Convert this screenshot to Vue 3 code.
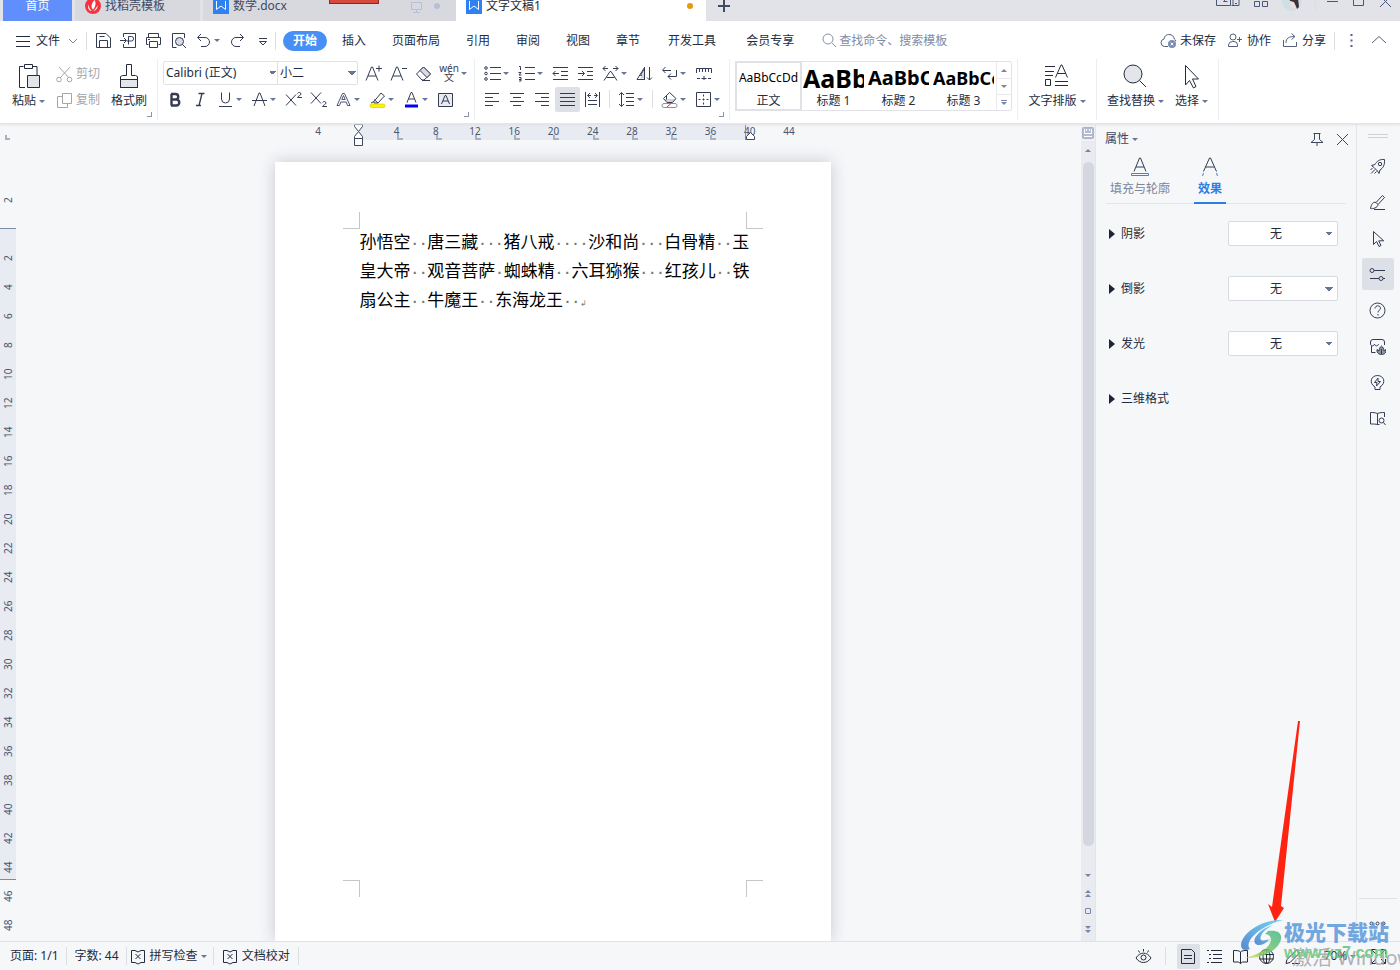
<script setup>
import { h, ref } from 'vue'

const icons = {
  // quick access
  menu: '<path d="M1 3.500h14M1 8.500h14M1 13.500h14"/>',
  chev: '<path d="M1 3l4 4 4-4"/>',
  save: '<path d="M1.500 15.500V1.500h9.500l4.500 4.500v9.500z"/><path d="M4.500 15v-6.500h8v6.500M4.500 4.500h5"/>',
  pdf: '<path d="M3.500 5V1.500h12v14h-12V12M0 8.500h6M4 6l2.500 2.500L4 11M8.500 12.500V4.500h3a2 2.200 0 010 4.500H7"/>',
  print: '<path d="M3.500 5V1.500h10V5M3.500 12.500h-2V5.500h14v7h-2M4.500 9.500h8v6h-8zM3 7.500h2"/>',
  preview: '<path d="M14.500 6V1.500h-12v14h4"/><circle cx="9.500" cy="9.500" r="4" fill="#d9dce2"/><path d="M12.500 12.500l3.500 3.500"/>',
  undo: '<path d="M6 2L2.500 5.500 6 9M3 5.500h7a4.500 4.500 0 010 9H6"/>',
  redo: '<path d="M11 2l3.500 3.500L11 9M14 5.500H7a4.500 4.500 0 000 9h4"/>',
  more: '<path d="M5 6.500h8"/><path d="M5.500 9.500h7L9 13z"/>',
  search: '<circle cx="6" cy="6" r="5"/><path d="M10 10l4 4"/>',
  cloud: '<path d="M8 14.500H4.500a3.800 3.800 0 01-.5-7.500C4.500 3.500 7 2.500 9 2.500c3 0 5 2 5.300 4.500 1 .6 1.500 1.400 1.500 2.200"/><circle cx="12" cy="12" r="4" fill="#7c8db2" stroke="none"/><path d="M10.700 10.700l2.600 2.600M13.300 10.700l-2.600 2.600" stroke="#fff"/>',
  coop: '<circle cx="6" cy="5" r="3"/><path d="M1.500 14.500v-1.500a4 4 0 014-3.500h1.500a3.500 3.500 0 013.500 3.500v1.500zM10 7.500h5M12.500 5v5"/>',
  share: '<path d="M1.500 8v6.500h13V10M4 11c0-5 3-6.500 8.500-6.500M9.500 1.500l3.500 3-3.500 3"/>',
  vdots: '<path d="M8.500 2v2M8.500 7.500v2M8.500 13v2" stroke-width="2"/>',
  up: '<path d="M1 11l7-6.500 7 6.500"/>',
  // clipboard
  paste: '<path d="M9 24.500H3.500v-21h4M17 3.500h4v9M8.500 1.500h8v4h-8z"/><path d="M11.500 12.500h12v12h-12z" fill="#e3e5ea"/>',
  cut: '<path d="M3 1l10 11M14 1L4 12"/><circle cx="3" cy="13.500" r="2.300"/><circle cx="13.500" cy="13.500" r="2.300"/>',
  copy: '<path d="M6.500 1.500h9v10h-9zM6 4.500H1.500v11h10V12"/>',
  brush: '<path d="M4.500 16.500h17v8h-17z" fill="#e3e5ea"/><path d="M4.500 24.500v-11l2-1h4v-11h5v11h4l2 1v11zM4.500 16.500h17"/>',
  // font
  aplus: '<path d="M1 15.500L6.500 2h1L13 15.500M3 11h8M11 3.500h6M14 .500v6"/>',
  aminus: '<path d="M1 15.500L6.500 2h1L13 15.500M3 11h8M12 3.500h5"/>',
  eraser: '<path d="M1.500 9l7-7 7 7-6.500 6H7z"/><path d="M5 5.500l7 7 3.500-3.500-7-7z" fill="#d9dce2"/><path d="M7 15.500h8"/>',
  bold: '<path d="M4.500 3v11.500M4 3h4.500a2.700 2.700 0 010 5.500H4.500h4.800a3 3 0 010 6H4" stroke-width="2.400"/>',
  italic: '<path d="M6.500 2.500h6M4 14.500h5M10 2.500l-3 12" stroke-width="1.300"/>',
  underline: '<path d="M4.500 1.500v6.500a4 4 0 008 0V1.500M2 15.500h13"/>',
  strike: '<path d="M3 15L8 2h1l5 13M1 9.500h15"/>',
  sup: '<path d="M1 3.500l10 11M11 3.500l-10 11M12.500 2.500c.5-1.500 3.500-1.300 3.500.500 0 1.300-3 2-3.500 3.500H17"/>',
  sub: '<path d="M1 1.500l10 11M11 1.500l-10 11M12.500 11.500c.5-1.500 3.500-1.300 3.500.500 0 1.300-3 2-3.500 3.500H17"/>',
  aout: '<path d="M2 14.500L7.500 2.500h2L15 14.500h-2.500L11.200 11H5.800l-1.300 3.500zM6.800 8.500h3.400L8.500 4.500z" fill="#fff" stroke="#4c566e"/>',
  marker: '<path d="M5 10.500L12 2l3.500 3L9 12H5zM5 8.500l4 3.500M2 12l3-1.500"/><rect x="1" y="13" width="15" height="3.500" rx="1.500" fill="#fff200" stroke="#c2b800" stroke-width=".500"/>',
  acolor: '<path d="M4 11.500L8 1.500h1l4 10M5.500 8h6"/><rect x="2" y="13.500" width="13" height="3" fill="#00f" stroke="none"/>',
  abox: '<path d="M1.500 2.500h14v13h-14z" fill="#e9ebef"/><path d="M4.500 13L8 4.500h1l3.500 8.500M6 10h5"/>',
  // paragraph
  bullets: '<circle cx="2" cy="3" r="1.300"/><circle cx="2" cy="8.500" r="1.300"/><circle cx="2" cy="14" r="1.300"/><path d="M6 2.500h11M6 8.500h11M6 14.500h11"/>',
  numbers: '<path d="M1 1.500h1.500V5M.500 7.500h2.500L1 10h2.500M1 12.500h2v3.500H1M1 14.500h2M7 2.500h10M7 8.500h10M7 14.500h10"/>',
  outdent: '<path d="M1 2.500h15M9 6.500h7M9 10.500h7M1 14.500h15M1 8.500h6M3.500 6L1 8.500 3.500 11"/>',
  indent: '<path d="M1 2.500h15M10 6.500h6M10 10.500h6M1 14.500h15M1 8.500h6M5 6l2.500 2.500L5 11"/>',
  ascale: '<path d="M2 15.500L8 6.500h1l6 9M4.500 12.500h8M1 3.500h5M11 3.500h5M3.500 1L1 3.500 3.500 6M13.500 1L16 3.500 13.500 6"/>',
  sort: '<path d="M4.500 10.500h4v-7zM1 14.500L8.500 2.500v12z"/><path d="M4 13.500l4.500-8v8z" fill="#cfd3da" stroke="none"/><path d="M8.500 2v13M13.500 2v13M11 12.500l2.500 2.500 2.500-2.500"/>',
  wrap: '<path d="M4.500 2L1.500 5l3 3M2 5.500h8M15.500 5v6.500H7M10 8.500l-3 3 3 3"/>',
  rulericon: '<path d="M1.500 8V3.500h15V8M4.500 4v3M7.500 4v3M10.500 4v3M13.500 4v3M2 13.500h3M6.500 13.500h5M13 13.500h3M9 11v4"/>',
  left: '<path d="M1 2.500h14M1 6.500h8M1 10.500h14M1 14.500h8"/>',
  center: '<path d="M1 2.500h14M4 6.500h8M1 10.500h14M4 14.500h8"/>',
  right: '<path d="M1 2.500h14M7 6.500h8M1 10.500h14M7 14.500h8"/>',
  justify: '<path d="M1 2.500h15M1 6.500h15M1 10.500h15M1 14.500h15"/>',
  spread: '<path d="M1.500 1v15M15.500 1v15M4 4.500h3M10 4.500h3M6 2L3.500 4.500 6 7M11 2l2.500 2.500L11 7M4 9.500h9M4 13.500h9"/>',
  lines: '<path d="M3.500 2v13M1 4l2.500-2.500L6 4M1 13l2.500 2.500L6 13M8 2.500h8M8 6.500h8M8 10.500h8M8 14.500h8"/>',
  bucket: '<path d="M3.500 8h11l-3 3.500h-5z" fill="#cfd3da" stroke="none"/><path d="M2.500 7.500l6-6 6.500 6-3.500 4h-5.500zM5.500 4.500v4"/><rect x="1" y="12.500" width="15" height="4" rx="2" fill="#fff" stroke="#8a8f9b"/><path d="M6 16l4-3.500" stroke="#e33"/>',
  border: '<path d="M1.500 1.500h14v14h-14z"/><path d="M8.500 3.500v10M3.500 8.500h10" stroke-dasharray="2 2"/>',
  // tools
  typeset: '<path d="M1 3.500h10M1 8.500h9M1 12.500h8M1.500 16.500h5v6h-5z"/><path d="M11.500 14.500L17 2h1l5.500 12.500M13.500 10.500h8M11 18.500h13M11 22.500h13"/>',
  find: '<circle cx="11" cy="11" r="9" fill="#e3e5ea"/><path d="M17.500 17.500l6.500 6.500"/>',
  pick: '<path d="M6.500 2.500v19.500l4-4.500 4 7.500 2.500-1.500-3.500-7.500h6z"/>',
  // panel
  afill: '<path d="M4 15.500L9.500 2h1L16 15.500M6 11h8"/><path d="M1.500 17.500h17v2h-17z" stroke="#3a84e8"/>',
  aeffect: '<path d="M3.500 15.500L9.500 2h1L16.500 15.500M5.500 11h9"/><path d="M3.500 17l-1 3M16.500 17l1 3" stroke="#3a84e8"/>',
  pin: '<path d="M4.500 2.500h7M5.500 2.500v6L2 11.500h12L10.500 8.500v-6M8 11.500V15"/>',
  close: '<path d="M2 2l11 11M13 2L2 13"/>',
  // side
  rocket: '<path d="M15.500 1.500c-5-.5-8 2-9.500 5L2.500 7.500 5 9.500l3.500 3.500 1.500 2.500 1-3.500c3-2 5-5 4.500-10.500zM1.500 12l2-2M2 15.500L6 11.500M5.500 15.500l2-2"/><circle cx="11" cy="6" r="1.700"/>',
  pen: '<path d="M7 8.500L13.500 1.500l2 2L9 10.500M7 8.500c-3-1-4.500 1.500-5.500 6C4 15 8.500 14 9 10.500zM5 15.500h11"/>',
  pointer: '<path d="M4.500 1.500v13l3-3 2.500 5 2-1-2.300-4.700h5z"/>',
  sliders: '<circle cx="3" cy="4.500" r="2"/><path d="M5 4.500h11M1 12.500h9M14 12.500h2"/><circle cx="12" cy="12.500" r="2"/>',
  help: '<circle cx="8.500" cy="8.500" r="7.500"/><path d="M6 6.500c0-3.500 5.500-3.500 5.500-.3 0 2-2.500 2-2.500 4.300M9 12v1.500"/>',
  shop: '<path d="M2.500 8v6.500h4M15.500 7V4a2.500 2.500 0 00-2.500-2.500H4A2.500 2.500 0 001.500 4v2c.5 2.500 3.500 2.500 4 0 .5 2.500 3.500 2.500 4 0"/><path d="M12.500 16.500c-3 0-5-2-4.500-5l2 1.500c0-2 1-4 2.500-5 1.500 1 2.500 3 2.500 5l2-1.500c.5 3-1.500 5-4.500 5zM12.500 11v5" fill="#8d94a4"/>',
  bulb: '<path d="M6 15.500v-2.500C-.5 9 2 1.500 8.500 1.500S17.500 9 11 13v2.500zM9 4L5.500 8.500H8L7.500 12l4-4.500H9z"/>',
  book: '<path d="M8.500 14.500V3.500C6 2.500 4 2.500 1.500 2.500v11.500c3 0 5 0 7 .5zM8.500 3.500C11 2.500 13 2.500 15.500 2.500V7M8.500 14.500h2"/><circle cx="12.500" cy="10.500" r="2.500"/><path d="M14.500 12.500l2 2.500"/>',
  dots: '<circle cx="2.500" cy="8.500" r="1.500"/><circle cx="8.500" cy="8.500" r="1.500"/><circle cx="14.500" cy="8.500" r="1.500"/>',
  // status
  spell: '<path d="M5 2.500H1.500v12H5M11 2.500h3.500v12H11M5 2.500l3 1.500 3-1.500M5 14.500l3 1.500 3-1.500M5.500 6l5 5M10.500 6l-5 5"/>',
  eye: '<path d="M1 10C5 3.500 12 3.500 16 10c-4 6-11 6-15 0zM8.500 1v2.500M3.500 2.500l1 2M13.500 2.500l-1 2"/><circle cx="8.500" cy="9.500" r="2.500"/>',
  page: '<path d="M1.500 1.500h10l3 3v11h-13zM4 7.500h8M4 10.500h8"/>',
  outline: '<path d="M1 2.500h2M5 2.500h11M3 6.500h2M7 6.500h9M3 10.500h2M7 10.500h9M1 14.500h2M5 14.500h11"/>',
  read: '<path d="M8.500 15.500V4C7 2.500 5 2.500 1.500 2.500v11.500h5zM8.500 15.500V4c1.500-1.500 3.500-1.500 7-1.500v11.500h-5z"/>',
  globe: '<circle cx="8.500" cy="8.500" r="7"/><ellipse cx="8.500" cy="8.500" rx="3.500" ry="7"/><path d="M1.500 6.500h14M1.500 11h14M8.500 1.500v14"/>',
  pencil: '<path d="M2 15.500l1-4L12.500 2l3 3L6 14.500zM8 15.500h8"/>',
  full: '<path d="M1.500 6V1.500H6M11 1.500h4.500V6M15.500 11v4.500H11M6 15.500H1.500V11M2 2l4 4M15 2l-4 4M2 15l4-4M15 15l-4-4"/>',
  // window
  screens: '<path d="M.500 2v12.500h14V2M15.500 14.500h7.500v-8h-6v8M7.500 5.500c5-1 4 1 0 5h4M19 12.500h2"/>',
  apps: '<path d="M1.500 0h5M9.500 0h5M1.500 6.500h5v5h-5zM9.500 6.500h5v5h-5z"/>',
  monitor: '<path d="M1.500 2.500h10v7h-10zM6.500 10v2.500M3 12.500h7"/>',
  plus: '<path d="M7 1v12M1 7h12" stroke-width="2"/>',
  min: '<path d="M1 4.500h11"/>',
  max: '<path d="M1.500 0v8.500h10V0"/>',
  winx: '<path d="M2 0l11 11M13 0L2 11"/>',
}

const Icon = (p) => {
  const s = Number(p.s || 17)
  return h('svg', { class: 'ico', viewBox: `0 0 ${s} ${s}`, width: s, height: s, 'aria-hidden': 'true', innerHTML: icons[p.name] })
}
Icon.props = ['name', 's']

const quick = [
  { i: 'save', t: '保存' }, { i: 'pdf', t: '输出为PDF' }, { i: 'print', t: '打印' }, { i: 'preview', t: '打印预览' },
  { i: 'undo', t: '撤销', d: 1 }, { i: 'redo', t: '恢复' }, { i: 'more', t: '自定义' },
]
const menus = ['插入', '页面布局', '引用', '审阅', '视图', '章节', '开发工具', '会员专享']
const fontTop = [{ i: 'aplus', t: '增大字号' }, { i: 'aminus', t: '减小字号' }, { i: 'eraser', t: '清除格式' }]
const fontRow = [
  { i: 'bold', t: '加粗' }, { i: 'italic', t: '倾斜' }, { i: 'underline', t: '下划线', d: 1 }, { i: 'strike', t: '删除线', d: 1 },
  { i: 'sup', t: '上标' }, { i: 'sub', t: '下标' }, { i: 'aout', t: '文字效果', d: 1 }, { i: 'marker', t: '突出显示', d: 1 },
  { i: 'acolor', t: '字体颜色', d: 1 }, { i: 'abox', t: '字符底纹' },
]
const paraTop = [
  { i: 'bullets', t: '项目符号', d: 1 }, { i: 'numbers', t: '编号', d: 1 }, { i: 'outdent', t: '减少缩进' }, { i: 'indent', t: '增加缩进' },
  { i: 'ascale', t: '中文版式', d: 1 }, { i: 'sort', t: '排序' }, { i: 'wrap', t: '编辑标记', d: 1 }, { i: 'rulericon', t: '制表位' },
]
const paraRow = [
  { i: 'left', t: '左对齐' }, { i: 'center', t: '居中' }, { i: 'right', t: '右对齐' }, { i: 'justify', t: '两端对齐', on: 1 },
  { i: 'spread', t: '分散对齐', sep: 1 }, { i: 'lines', t: '行距', d: 1, sep: 1 }, { i: 'bucket', t: '底纹', d: 1 }, { i: 'border', t: '边框', d: 1 },
]
const styles = [
  { s: 'AaBbCcDd', n: '正文', c: 'body' }, { s: 'AaBbC', n: '标题 1', c: 'h1' },
  { s: 'AaBbC', n: '标题 2', c: 'h2' }, { s: 'AaBbCc', n: '标题 3', c: 'h3' },
]
const hMarks = ['4', '', '4', '8', '12', '16', '20', '24', '28', '32', '36', '40', '44']
const vMarks = ['2', '', ...Array.from({ length: 24 }, (_, k) => String((k + 1) * 2))]
const lines = [
  '孙悟空  唐三藏   猪八戒    沙和尚   白骨精  玉',
  '皇大帝  观音菩萨 蜘蛛精  六耳猕猴   红孩儿  铁',
  '扇公主  牛魔王  东海龙王  ',
].map((l) => l.match(/ +|[^ ]+/g))
const effects = ref([
  { n: '阴影', v: '无' }, { n: '倒影', v: '无' }, { n: '发光', v: '无' }, { n: '三维格式' },
])
const side = ['rocket', 'pen', 'pointer', 'sliders', 'help', 'shop', 'bulb', 'book']
const sideNames = ['快捷', '样式', '选择', '属性', '帮助', '素材', '推荐', '查词']
</script>

<template>
  <div class="app">
    <header class="tabs">
      <button class="tab home">首页</button>
      <button class="tab docer">
        <svg class="ico" width="16" height="16" viewBox="0 0 16 16"><circle cx="8" cy="8" r="8" fill="#f5333f" stroke="none" /><path d="M9.500 2c2 3 1 7-1.500 9.500C5.500 9 6.500 5 9.500 2zM4 6.500c-.5 3 1 5 3 6.500-3 0-5-3-3-6.500zM12.500 7c.5 3-1.500 5.500-4 6 1.500-1.500 3-3 4-6z" fill="#fff" stroke="none" /></svg>
        找稻壳模板
      </button>
      <button class="tab doc">
        <svg class="ico" width="16" height="16" viewBox="0 0 16 16"><path d="M0 0h16v16H0z" fill="#2f80f0" stroke="none" /><path d="M3.500 3v8.500L8 8l4.500 3.500V3" stroke="#fff" /></svg>
        数学.docx
        <span class="ribbon-tag"></span>
        <Icon name="monitor" s="13" class="pale" /><i class="dot blue"></i>
      </button>
      <button class="tab current">
        <svg class="ico" width="16" height="16" viewBox="0 0 16 16"><path d="M0 0h16v16H0z" fill="#2f80f0" stroke="none" /><path d="M3.500 3v8.500L8 8l4.500 3.500V3" stroke="#fff" /></svg>
        文字文稿1<i class="dot orange"></i>
      </button>
      <button class="tab new" aria-label="新建"><Icon name="plus" s="14" /></button>
      <div class="win">
        <Icon name="screens" s="24" /><Icon name="apps" s="16" />
        <svg class="ico" width="20" height="20" viewBox="0 0 20 20"><circle cx="10" cy="8" r="10" fill="#cfe0e4" stroke="none" /><path d="M7 3l9 2 1 9-2 2-2-5-5-3z" fill="#3a2f3c" stroke="none" /><path d="M8 8l4 1 2 7-5-2z" fill="#f0dcd9" stroke="none" /></svg>
        <i class="vline"></i>
        <Icon name="min" s="13" /><Icon name="max" s="13" /><Icon name="winx" s="15" />
      </div>
    </header>

    <nav class="menubar">
      <button class="file"><Icon name="menu" s="16" />文件<Icon name="chev" s="10" class="grey" /></button>
      <i class="vline"></i>
      <div class="quick">
        <button v-for="q in quick" :key="q.i" class="tool" :class="{ drop: q.d }" :aria-label="q.t"><Icon :name="q.i" /></button>
      </div>
      <i class="vline"></i>
      <button class="pill">开始</button>
      <button v-for="(m, k) in menus" :key="m" class="menu" :class="{ wide: k > 5 }">{{ m }}</button>
      <label class="search"><Icon name="search" s="15" /><input aria-label="搜索" placeholder="查找命令、搜索模板" /></label>
      <div class="cloud">
        <button><Icon name="cloud" />未保存</button>
        <button><Icon name="coop" />协作</button>
        <button><Icon name="share" />分享</button>
        <i class="vline"></i>
        <button aria-label="更多"><Icon name="vdots" /></button>
        <button aria-label="收起功能区"><Icon name="up" /></button>
      </div>
    </nav>

    <section class="ribbon">
      <div class="group clip">
        <button class="big"><Icon name="paste" s="26" /><span class="caret">粘贴</span></button>
        <div class="stack">
          <button class="mini"><Icon name="cut" />剪切</button>
          <button class="mini"><Icon name="copy" />复制</button>
        </div>
        <button class="big"><Icon name="brush" s="26" /><span>格式刷</span></button>
        <i class="corner"></i>
      </div>
      <div class="group font">
        <div class="row">
          <div class="combos">
            <select class="family" aria-label="字体"><option>Calibri (正文)</option></select>
            <select class="size" aria-label="字号"><option>小二</option></select>
          </div>
          <button v-for="b in fontTop" :key="b.i" class="tool" :aria-label="b.t"><Icon :name="b.i" /></button>
          <button class="tool drop pinyin"><span>wén</span><span>文</span></button>
        </div>
        <div class="row">
          <button v-for="b in fontRow" :key="b.i" class="tool" :class="{ drop: b.d }" :aria-label="b.t"><Icon :name="b.i" /></button>
        </div>
        <i class="corner"></i>
      </div>
      <div class="group para">
        <div class="row">
          <button v-for="b in paraTop" :key="b.i" class="tool" :class="{ drop: b.d }" :aria-label="b.t"><Icon :name="b.i" /></button>
        </div>
        <div class="row">
          <template v-for="b in paraRow" :key="b.i">
            <button class="tool" :class="{ drop: b.d, on: b.on }" :aria-label="b.t"><Icon :name="b.i" /></button>
            <i v-if="b.sep" class="sep"></i>
          </template>
        </div>
        <i class="corner"></i>
      </div>
      <div class="group gal">
        <div class="gallery">
          <button v-for="s in styles" :key="s.n" class="style" :class="s.c"><span class="sample">{{ s.s }}</span><span>{{ s.n }}</span></button>
          <div class="scroller">
            <button aria-label="上一行"><i class="tri upward"></i></button>
            <button aria-label="下一行"><i class="tri"></i></button>
            <button aria-label="展开"><i class="bar"></i><i class="tri"></i></button>
          </div>
        </div>
      </div>
      <div class="group type"><button class="big"><Icon name="typeset" s="26" /><span class="caret">文字排版</span></button></div>
      <div class="group seek">
        <button class="big"><Icon name="find" s="26" /><span class="caret">查找替换</span></button>
        <button class="big"><Icon name="pick" s="26" /><span class="caret">选择</span></button>
      </div>
    </section>

    <main class="work">
      <div class="vruler"><i class="tabmark"></i><span v-for="(m, k) in vMarks" :key="k">{{ m }}</span></div>
      <div class="canvas">
        <div class="hruler">
          <span v-for="(m, k) in hMarks" :key="k" :class="{ tick: k > 1 && k < 11 }">{{ m }}</span>
          <svg class="hourglass" width="11" height="22" viewBox="0 0 11 22"><path d="M1.500.500h8v2L5.500 7.500l4 5v2h-8v-2l4-5-4-5zM1.500 14.500h8v7h-8z" fill="#fff" stroke="#3c4660" /></svg>
          <svg class="endmark" width="11" height="16" viewBox="0 0 11 16"><path d="M.500 0v16" stroke="#7c8aa8" /><path d="M1.500 15.500v-3l4-4 4 4v3z" fill="#fff" stroke="#3c4660" /></svg>
        </div>
        <article class="page">
          <div class="marks top"><i></i><i></i></div>
          <div class="text">
            <p v-for="(l, k) in lines" :key="k"><template v-for="(seg, j) in l" :key="j"><span v-if="seg[0] === ' '" class="sp">{{ '·'.repeat(seg.length) }}</span><template v-else>{{ seg }}</template></template><span v-if="k === 2" class="ret">↲</span></p>
          </div>
          <div class="marks bottom"><i></i><i></i></div>
        </article>
      </div>
      <div class="vscroll">
        <svg class="ico" width="12" height="12" viewBox="0 0 12 12"><path d="M.500 1.500a1 1 0 011-1h9a1 1 0 011 1v9a1 1 0 01-1 1h-9a1 1 0 01-1-1z" stroke="#aab2ca" fill="#b4bbd0" /><path d="M2.500 2v4.500h7V2M4.500 2v2M7.500 2v2M2 9.500h8" stroke="#fff" /></svg>
        <div class="track">
          <button aria-label="向上"><i class="tri upward"></i></button>
          <div class="thumb"></div>
          <button aria-label="向下"><i class="tri"></i></button>
          <button aria-label="上一页"><i class="tri upward"></i><i class="tri upward"></i></button>
          <button aria-label="选择浏览对象"><i class="square"></i></button>
          <button aria-label="下一页"><i class="tri"></i><i class="tri"></i></button>
        </div>
      </div>

      <aside class="panel">
        <div class="phead"><span class="caret">属性</span><button aria-label="固定"><Icon name="pin" /></button><button aria-label="关闭"><Icon name="close" s="15" /></button></div>
        <div class="ptabs">
          <button><Icon name="afill" s="20" />填充与轮廓</button>
          <button class="on"><Icon name="aeffect" s="20" />效果</button>
        </div>
        <div v-for="(e, k) in effects" :key="e.n" class="effect">
          <label :for="'fx' + k">{{ e.n }}</label>
          <select v-if="e.v" :id="'fx' + k" v-model="e.v"><option>无</option></select>
        </div>
      </aside>

      <aside class="side">
        <i class="grip"></i>
        <button v-for="(s, k) in side" :key="s" :class="{ on: s === 'sliders' }" :aria-label="sideNames[k]"><Icon :name="s" /></button>
        <div class="foot"><button aria-label="更多工具"><Icon name="dots" /></button></div>
      </aside>
    </main>

    <footer class="status">
      <div class="stats">
        <span>页面: 1/1</span><i class="vline"></i><span>字数: 44</span><i class="vline"></i>
        <button class="check"><Icon name="spell" /><span class="caret">拼写检查</span></button><i class="vline"></i>
        <button><Icon name="spell" />文档校对</button><i class="vline"></i>
      </div>
      <div class="views">
        <button aria-label="护眼模式"><Icon name="eye" /></button><i class="vline"></i>
        <button class="on" aria-label="页面视图"><Icon name="page" /></button>
        <button aria-label="大纲"><Icon name="outline" /></button>
        <button aria-label="阅读版式"><Icon name="read" /></button>
        <button aria-label="Web版式"><Icon name="globe" /></button>
        <button aria-label="写作模式"><Icon name="pencil" /></button>
        <button class="zoom caret">70%</button>
        <button aria-label="全屏"><Icon name="full" /></button>
      </div>
    </footer>

    <div class="overlay">
      <svg class="arrow" width="40" height="204" viewBox="0 0 40 204"><path d="M37 1l2 0L20 186l3 2L14 202 7 184l4 3z" fill="#ff2312" /></svg>
      <div class="brand">
        <span class="activate">激活 Windows</span>
        <svg width="46" height="42" viewBox="0 0 46 42"><defs><linearGradient id="gb" x1="1" y1="0" x2="0" y2="1"><stop offset="0" stop-color="#5fd0f5" /><stop offset="1" stop-color="#3f78c8" /></linearGradient><linearGradient id="gg" x1="1" y1="0" x2="0" y2="1"><stop offset="0" stop-color="#45b88c" /><stop offset=".600" stop-color="#7cca6c" /><stop offset="1" stop-color="#efe05a" /></linearGradient></defs><path d="M43 1C22 0 2 14 1 26c0 5 4 6 9 4C4 24 16 8 43 1z" fill="url(#gb)" /><path d="M33 6C20 10 12 20 15 24c2 4 10 2 15-4-8 3-11 1-9-3 2-5 7-8 12-11z" fill="url(#gb)" /><path d="M28 12c8-1 14 1 13 8C39 31 22 40 5 39c11-3 22-8 25-15 2-4 1-8-5-9z" fill="url(#gg)" /></svg>
        <div class="words"><b>极光下载站</b><span>www.xz7.com</span></div>
      </div>
    </div>
  </div>
</template>

<style>
html, body { margin: 0; overflow: hidden; }
</style>

<style scoped>
.app { position: relative; display: flex; flex-direction: column; height: 100vh; overflow: hidden; font: 12px/16px "Noto Sans", "Noto Sans CJK SC", sans-serif; color: #232b3d; background: #f6f7f9; }
.app * { box-sizing: border-box; }
button, select, input { font: inherit; color: inherit; border: 0; padding: 0; margin: 0; background: none; }
button { display: flex; align-items: center; justify-content: center; white-space: nowrap; }
.ico { display: block; flex: none; fill: none; stroke: currentColor; stroke-width: 1; }
.vline { flex: none; width: 1px; height: 18px; background: #dcdee4; }
.tri { display: block; width: 0; border: 3px solid transparent; border-top: 3px solid #7685a6; border-bottom: 0; }
.tri.upward { border-top: 0; border-bottom: 3px solid #7685a6; }
.caret { display: flex; align-items: center; gap: 3px; }
.caret::after { content: ""; border: 3px solid transparent; border-top: 3px solid #66759a; border-bottom: 0; }

.tabs { display: flex; align-items: flex-end; gap: 3px; flex: none; height: 21px; overflow: hidden; padding-left: 3px; background: #e2e3e8; }
.tab { height: 30px; gap: 4px; color: #3f4a63; background: #d8d9de; }
.home { width: 69px; color: #fff; background: #608efc; }
.docer { width: 125px; justify-content: flex-start; padding-left: 10px; }
.doc { position: relative; width: 253px; justify-content: flex-start; padding: 0 16px 0 10px; }
.ribbon-tag { position: absolute; left: 126px; top: 0; width: 50px; height: 13px; background: #d6493c; border: 1px solid #8e2620; }
.pale { color: #b7bfd6; margin-left: auto; margin-right: 7px; }
.dot { width: 6px; height: 6px; border-radius: 50%; }
.blue { background: #b7bfd6; }
.orange { background: #e69a0b; margin-left: auto; }
.current { width: 250px; justify-content: flex-start; padding: 0 13px 0 10px; margin-left: -3px; background: #fff; color: #232b3d; }
.new { width: 30px; background: none; }
.win { display: flex; align-items: center; gap: 13px; height: 36px; margin-left: auto; padding-right: 7px; color: #4a5877; }
.win .vline { margin: 0 -3px 0 0; }

.menubar { display: flex; align-items: center; flex: none; height: 38px; padding-top: 1px; background: #fff; }
.file { gap: 5px; padding: 0 8px 0 15px; }
.file .grey { margin-left: 3px; color: #7d879d; }
.quick { display: flex; padding: 0 0 0 4px; }
.tool { flex: none; width: 25px; height: 25px; color: #333c52; border-radius: 2px; }
.drop { width: 34px; justify-content: flex-start; padding-left: 4px; }
.drop::after { content: ""; margin-left: 2px; border: 3px solid transparent; border-top: 3px solid #66759a; border-bottom: 0; }
.pill { width: 44px; height: 20px; margin: 0 2px 0 7px; border-radius: 10px; color: #fff; font-weight: bold; background: #468ff5; }
.menu { padding: 0 13px; }
.wide { padding: 0 15px; }
.search { display: flex; align-items: center; gap: 2px; margin-left: 13px; color: #8590ab; }
.search input { width: 130px; outline: 0; }
.search input::placeholder { color: #7f8aa6; opacity: 1; }
.cloud { display: flex; align-items: center; gap: 11px; margin-left: auto; padding-right: 12px; }
.cloud button { gap: 3px; color: #232b3d; }
.cloud .ico { color: #55607a; }
.cloud .vline { margin: 0 -3px; }

.ribbon { display: flex; flex: none; height: 65px; background: #fff; border-bottom: 1px solid #e4e6ea; box-shadow: 0 1px 2px #dfe1e5; z-index: 1; }
.group { position: relative; border-right: 1px solid #eceef2; padding-top: 2px; margin-bottom: 3px; }
.corner { position: absolute; right: 5px; bottom: 3px; width: 5px; height: 5px; border: solid #8a94ac; border-width: 0 1px 1px 0; }
.row { display: flex; align-items: center; height: 26px; }
.big { flex-direction: column; gap: 4px; padding-top: 2px; height: 48px; }
.clip { display: flex; width: 158px; padding-left: 12px; gap: 11px; }
.mini { height: 26px; gap: 3px; color: #a4a6ab; }
.clip .big { width: 36px; }
.clip .big:first-child { width: 33px; }
.font, .para { padding-top: 1px; padding-left: 5px; }
.font { width: 317px; }
.combos { display: flex; width: 195px; height: 24px; margin-right: 3px; border: 1px solid #dfe1e6; border-radius: 2px; }
select { appearance: none; background: linear-gradient(45deg, transparent 50%, #66759a 50%) right 8px center / 4px 4px no-repeat, linear-gradient(-45deg, transparent 50%, #66759a 50%) right 4px center / 4px 4px no-repeat; }
.family { flex: 1; padding-left: 2px; border-right: 1px solid #dfe1e6; background-position: right 4px center, right 0 center; background-origin: content-box; }
.size { width: 79px; padding-left: 2px; background-position: right 5px center, right 1px center; }
.pinyin { display: grid; grid-template-columns: 18px 6px; line-height: 9px; align-content: center; justify-items: center; font-size: 10px; column-gap: 2px; }
.pinyin::after { grid-area: 1 / 2 / 3 / 3; align-self: center; }
.pinyin span { grid-column: 1; }
.para { width: 255px; }
.on { background: #dde1e7; border-radius: 2px; }
.sep { width: 1px; height: 18px; margin: 0 4px; background: #dcdee4; }
.gal { width: 288px; padding-left: 5px; }
.gallery { display: flex; width: 277px; height: 50px; border: 1px solid #e0e2e7; border-radius: 2px; }
.style { flex: none; flex-direction: column; width: 65px; padding: 0 2px; overflow: hidden; align-items: center; }
.sample { display: flex; align-items: center; width: 61px; height: 30px; overflow: hidden; color: #000; line-height: 30px; }
.body { outline: 2px solid #e0e2e7; outline-offset: -1px; }
.body .sample { justify-content: center; }
.h1 .sample { font-size: 25px; font-weight: bold; }
.h2 .sample { font-size: 20px; font-weight: bold; }
.h3 .sample { font-size: 18px; font-weight: bold; }
.scroller { flex: 1; display: grid; grid-template-rows: 1fr 1fr 1fr; border-left: 1px solid #e8eaee; }
.scroller button { flex-direction: column; gap: 1px; }
.scroller button + button { border-top: 1px solid #e8eaee; }
.bar { width: 6px; height: 1px; background: #7685a6; }
.type { width: 79px; display: flex; justify-content: center; }
.seek { width: 122px; display: flex; justify-content: center; gap: 11px; }

.work { display: flex; flex: 1; min-height: 0; }
.vruler { position: relative; width: 16px; padding-top: 62px; overflow: hidden; font-size: 10px; color: #4b566f; background: linear-gradient(transparent 104px, #7c8aa8 104px 105px, #e8ebf1 105px 755px, #7c8aa8 755px 756px, transparent 756px); }
.vruler span { display: flex; align-items: center; justify-content: center; width: 16px; height: 29px; writing-mode: vertical-rl; transform: rotate(180deg); }
.tabmark { position: absolute; left: 5px; top: 11px; width: 5px; height: 5px; border: solid #a9b0bf; border-width: 0 0 2px 2px; }
.canvas { flex: 1; display: flex; flex-direction: column; align-items: center; padding-left: 8px; min-width: 0; overflow: hidden; }
.hruler { position: relative; flex: none; display: grid; grid-template-columns: repeat(13, 1fr); width: 510px; height: 16px; margin-left: 2px; font-size: 10px; line-height: 14px; text-align: center; color: #4b566f; background: linear-gradient(90deg, transparent 60px, #e8ebf1 60px 451px, transparent 451px); }
.hruler span { position: relative; }
.tick::after { content: ""; position: absolute; left: 50%; bottom: 0; width: 4px; height: 3px; border: solid #a9b0bf; border-width: 0 0 2px 2px; }
.hourglass { position: absolute; left: 54px; top: 0; }
.endmark { position: absolute; left: 446px; top: 0; }
.page { position: relative; flex: 1; width: 556px; margin-top: 22px; padding-top: 50px; background: #fff; box-shadow: 0 0 16px #c6c8cd; }
.marks { display: flex; justify-content: space-between; padding: 0 68px; }
.marks i { width: 17px; height: 17px; border: 0 solid #c4c6ca; }
.top i { border-width: 0 1px 1px 0; }
.top i + i { border-width: 0 0 1px 1px; }
.bottom { padding-top: 567px; }
.bottom i { border-width: 1px 1px 0 0; }
.bottom i + i { border-width: 1px 0 0 1px; }
.text { margin-top: -3px; padding: 0 75px 0 85px; font-size: 17px; line-height: 29px; color: #000; }
.text p { margin: 0; white-space: nowrap; font-family: "Noto Sans CJK SC", sans-serif; height: 29px; }
.sp { font: bold 14px "Liberation Mono", monospace; color: #777; }
.ret { font-size: 8px; color: #777; }
.vscroll { flex: none; width: 15px; display: flex; flex-direction: column; align-items: center; padding-top: 3px; border-right: 1px solid #e3e5ea; background: #f0f1f5; }
.track { flex: 1; width: 100%; display: flex; flex-direction: column; align-items: center; margin-top: 2px; padding-bottom: 3px; background: #e9ebf1; }
.track button { flex-direction: column; gap: 1px; width: 100%; height: 18px; }
.thumb { flex: 1; width: 11px; margin: 3px 0 20px; border-radius: 6px; background: #d4d7e0; }
.square { width: 6px; height: 6px; border: 1px solid #7685a6; border-radius: 1px; }

.panel { flex: none; width: 261px; padding: 0 10px; border-right: 1px solid #e3e5ea; }
.phead { display: flex; align-items: center; height: 30px; margin: 0 -4px 0 -1px; color: #3c465c; gap: 9px; }
.phead .caret { margin-right: auto; }
.ptabs { display: flex; align-items: stretch; gap: 24px; height: 50px; border-bottom: 1px solid #e3e5ea; padding-left: 4px; }
.ptabs button { flex-direction: column; justify-content: flex-start; gap: 5px; color: #7c8599; padding-top: 2px; }
.ptabs .ico { color: #333c52; }
.ptabs .on { background: none; color: #2f7de4; font-weight: bold; padding: 2px 4px 0; border-bottom: 2px solid #2f7de4; border-radius: 0; margin-bottom: -1px; }
.effect { display: flex; align-items: center; justify-content: space-between; height: 55px; padding: 0 8px 0 3px; }
.ptabs + .effect { margin-top: 2px; }
.effect label { display: flex; align-items: center; gap: 6px; }
.effect label::before { content: ""; border: 5px solid transparent; border-left: 6px solid #1c2538; border-right: 0; }
.effect select { width: 110px; height: 25px; padding-right: 14px; text-align: center; text-align-last: center; border: 1px solid #d7dae0; border-radius: 2px; background-color: #fff; }

.side { flex: none; display: flex; flex-direction: column; align-items: center; gap: 4px; width: 43px; padding-right: 2px; }
.grip { width: 20px; height: 4px; margin: 10px 0 8px; border: solid #cfd2d9; border-width: 1px 0; }
.side button { width: 32px; height: 32px; color: #333c52; }
.foot { width: 38px; margin-top: auto; padding: 8px 3px 2px; border-top: 1px solid #dfe1e6; }

.status { display: flex; align-items: center; justify-content: space-between; flex: none; height: 29px; border-top: 1px solid #e0e2e6; background: #f6f7f9; }
.stats { display: flex; align-items: center; padding-left: 10px; gap: 8px; }
.stats span + .vline { margin-left: -1px; }
.stats button { gap: 3px; }
.stats .check { margin: 0 -2px 0 -5px; }
.views { display: flex; align-items: center; gap: 3px; padding-right: 10px; }
.views button { width: 23px; height: 25px; color: #232b3d; }
.views > .vline { margin: 0 8px 0 7px; }
.views .zoom { width: 44px; margin: 0 2px 0 11px; }

.overlay { position: absolute; right: 0; bottom: 0; width: 160px; height: 250px; overflow: hidden; pointer-events: none; }
.arrow { position: absolute; left: 21px; top: 0; }
.brand { position: absolute; left: 0; bottom: 7px; display: flex; align-items: flex-start; white-space: nowrap; opacity: .85; }
.words { position: relative; display: flex; flex-direction: column; margin-left: -2px; }
.words b { font: 900 21px/24px "Noto Sans CJK SC", sans-serif; color: #5b98da; }
.words span { font: bold 16px/20px "Liberation Sans", sans-serif; color: #62c778; }
.activate { position: absolute; left: 52px; top: 27px; font-size: 20px; line-height: 24px; color: #a3a6ab; }
</style>
